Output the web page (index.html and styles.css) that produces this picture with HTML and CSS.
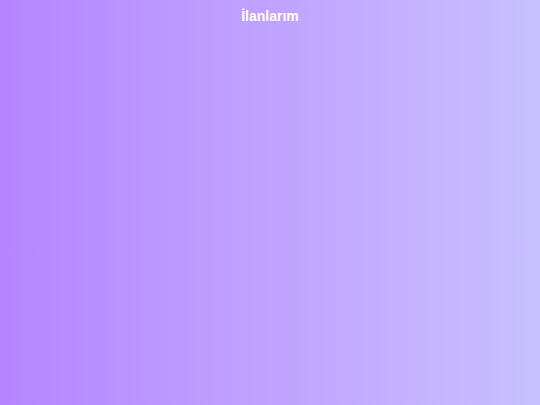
FILE: index.html
```html
<!DOCTYPE html>
<html lang="tr">
<head>
<meta charset="utf-8">
<title>İlanlarım</title>
<link rel="stylesheet" href="styles.css">
</head>
<body>
<div class="page">
  <header class="topbar"><h1 class="title">İlanlarım</h1></header>
</div>
</body>
</html>
```

FILE: styles.css
```css
html, body { margin: 0; padding: 0; height: 100%; }
.page {
  width: 540px;
  height: 405px;
  background: linear-gradient(to right, #b785ff, #c8c0fe);
  font-family: "Liberation Sans", Arial, sans-serif;
}
.topbar {
  display: flex;
  justify-content: center;
  padding-top: 8px;
}
.title {
  margin: 0;
  color: #ffffff;
  font-size: 14px;
  font-weight: bold;
  line-height: 16px;
}
```
